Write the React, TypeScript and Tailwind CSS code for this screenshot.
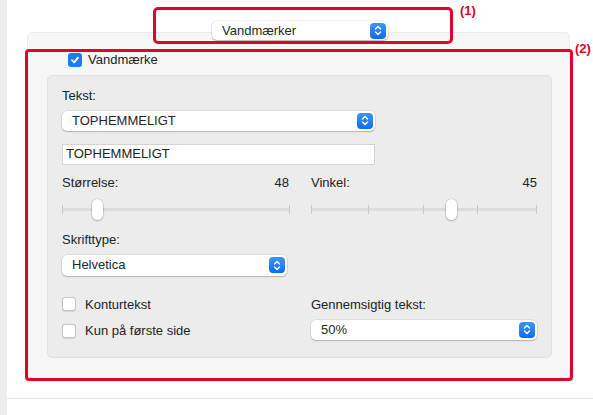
import React from "react";

const font = { fontFamily: '"Liberation Sans", Arial, sans-serif' };

function Stepper() {
  return (
    <span className="flex h-[16px] w-[16px] items-center justify-center rounded-[4px] bg-gradient-to-b from-[#3d95fb] to-[#0a6cf2]">
      <svg width="8" height="11" viewBox="0 0 8 11" fill="none">
        <path d="M1.5 4 L4 1.5 L6.5 4" stroke="white" strokeWidth="1.4" strokeLinecap="round" strokeLinejoin="round" />
        <path d="M1.5 7 L4 9.5 L6.5 7" stroke="white" strokeWidth="1.4" strokeLinecap="round" strokeLinejoin="round" />
      </svg>
    </span>
  );
}

function Popup({ label, className }: { label: string; className: string }) {
  return (
    <div
      className={
        "flex items-center justify-between rounded-[5px] bg-white pl-[10px] pr-[2px] text-[13px] text-[#262626] shadow-[0_0_0_0.5px_rgba(0,0,0,0.12),0_1px_1.5px_rgba(0,0,0,0.2)] " +
        className
      }
    >
      <span>{label}</span>
      <Stepper />
    </div>
  );
}

function Check({ checked }: { checked?: boolean }) {
  if (checked) {
    return (
      <span className="flex h-[14px] w-[14px] items-center justify-center rounded-[3px] bg-[#1a7cf5]">
        <svg width="10" height="10" viewBox="0 0 10 10" fill="none">
          <path d="M2 5.2 L4.2 7.4 L8 2.6" stroke="white" strokeWidth="1.8" strokeLinecap="round" strokeLinejoin="round" />
        </svg>
      </span>
    );
  }
  return <span className="h-[14px] w-[14px] rounded-[3px] border border-[#c4c4c4] bg-white shadow-[0_0.5px_1px_rgba(0,0,0,0.1)]" />;
}

function Slider({ thumb, ticks }: { thumb: number; ticks: number[] }) {
  return (
    <div className="relative h-[20px] w-full">
      <div className="absolute left-0 right-0 top-[9px] h-[3px] bg-[#dcdcdc]" />
      {ticks.map((t, i) => (
        <div key={i} className="absolute top-[6px] h-[9px] w-[1px] bg-[#c8c8c8]" style={{ left: t }} />
      ))}
      <div
        className="absolute top-0 h-[21px] w-[11px] rounded-full bg-white shadow-[0_0_0_0.5px_rgba(0,0,0,0.15),0_1px_2px_rgba(0,0,0,0.25)]"
        style={{ left: thumb }}
      />
    </div>
  );
}

export default function App() {
  return (
    <div className="relative flex h-[415px] w-[593px] overflow-hidden bg-white text-[#222]" style={font}>
      <div className="h-full w-[7px] bg-[#ededed]" />
      <div className="flex flex-1 flex-col">
        <div className="h-[398px] pl-[20px] pr-[16px] pt-[32px]">
          {/* tab panel */}
          <div className="relative h-[348px] w-[543px] rounded-[5px] border border-[#ececec] bg-[#f6f6f6]">
            <div className="absolute left-[184px] top-[-12px]">
              <Popup label="Vandmærker" className="h-[19px] w-[176px]" />
            </div>
            <div className="flex items-center gap-[6px] pl-[40px] pt-[17px] text-[13px]">
              <Check checked />
              <span>Vandmærke</span>
            </div>
            <div className="ml-[19px] mt-[5px] h-[283px] w-[505px] rounded-[5px] border border-[#e2e2e2] bg-[#ececec] px-[14px] pt-[12px] text-[13px]">
              <div className="leading-[16px]">Tekst:</div>
              <Popup label="TOPHEMMELIGT" className="mt-[7px] h-[20px] w-[313px]" />
              <div className="mt-[13px] flex h-[21px] w-[313px] items-center border border-[#d4d4d4] bg-white pl-[3px] text-[13px]">
                TOPHEMMELIGT
              </div>
              <div className="mt-[10px] flex gap-[22px]">
                <div className="w-[228px]">
                  <div className="flex justify-between leading-[16px]">
                    <span>Størrelse:</span>
                    <span>48</span>
                  </div>
                  <div className="mt-[8px]">
                    <Slider thumb={30} ticks={[0, 227]} />
                  </div>
                  <div className="mt-[13px] leading-[16px]">Skrifttype:</div>
                  <Popup label="Helvetica" className="mt-[7px] h-[21px] w-[225px]" />
                  <div className="mt-[19px] flex items-center gap-[9px]">
                    <Check />
                    <span>Konturtekst</span>
                  </div>
                  <div className="mt-[7px] flex items-center gap-[9px]">
                    <Check />
                    <span>Kun på første side</span>
                  </div>
                </div>
                <div className="w-[226px]">
                  <div className="flex justify-between leading-[16px]">
                    <span>Vinkel:</span>
                    <span>45</span>
                  </div>
                  <div className="mt-[8px]">
                    <Slider thumb={135} ticks={[0, 57, 112, 166, 225]} />
                  </div>
                  <div className="mt-[78px] leading-[16px]">Gennemsigtig tekst:</div>
                  <Popup label="50%" className="mt-[7px] h-[20px] w-[226px]" />
                </div>
              </div>
            </div>
          </div>
        </div>
        <div className="h-[1px] bg-[#e2e2e2]" />
      </div>

      {/* annotations */}
      <div className="pointer-events-none absolute left-[153px] top-[7px] h-[37px] w-[300px] rounded-[5px] border-[3px] border-[#e4002b]" />
      <div className="absolute left-[460px] top-[1px] text-[13px] font-bold text-[#e4002b]">(1)</div>
      <div className="pointer-events-none absolute left-[25px] top-[49px] h-[332px] w-[548px] rounded-[4px] border-[3px] border-[#e4002b]" />
      <div className="absolute left-[575px] top-[39px] text-[13px] font-bold text-[#e4002b]">(2)</div>
    </div>
  );
}
